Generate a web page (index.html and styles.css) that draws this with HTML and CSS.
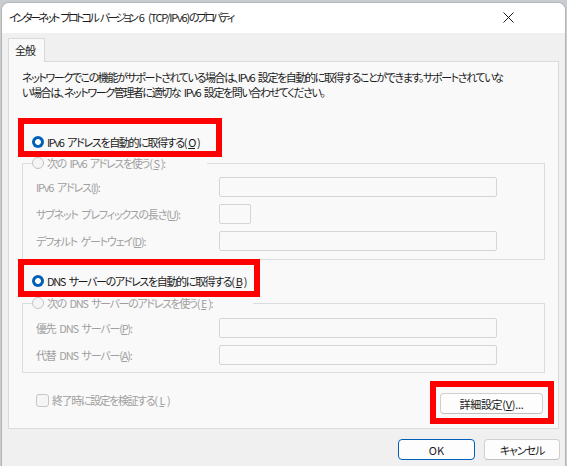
FILE: index.html
```html
<!DOCTYPE html>
<html lang="ja">
<head>
  <meta charset="UTF-8" />
  <title>インターネット プロトコル バージョン 6 (TCP/IPv6)のプロパティ</title>
  <link rel="stylesheet" href="styles.css">
</head>
<body>
  <div class="window">
    <div class="titlebar">
      <span class="title">インターネット プロトコル バージョン <span class="latin">6 (TCP/IPv6)</span>のプロパティ</span>
      <svg class="close" width="11" height="11" viewBox="0 0 11 11">
        <path d="M0.5 0.5 L10.5 10.5 M10.5 0.5 L0.5 10.5" stroke="#1a1a1a" stroke-width="1" fill="none"/>
      </svg>
    </div>

    <div class="content">
      <div class="tabs"><div class="tab">全般</div></div>

      <div class="panel">
        <p class="desc">ネットワークでこの機能がサポートされている場合は、IPv6 設定を自動的に取得することができます。サポートされていな<br>い場合は、ネットワーク管理者に適切な IPv6 設定を問い合わせてください。</p>

        <div class="radio-row first"><span class="radio checked"></span>IPv6 アドレスを自動的に取得する(<u>O</u>)</div>

        <fieldset class="group">
          <legend class="radio-row disabled legend-ip"><span class="radio"></span>次の IPv6 アドレスを使う(<u>S</u>):</legend>
          <div class="field"><span class="field-label">IPv6 アドレス(<u>I</u>):</span><span class="input wide"></span></div>
          <div class="field"><span class="field-label">サブネット プレフィックスの長さ(<u>U</u>):</span><span class="input small"></span></div>
          <div class="field"><span class="field-label">デフォルト ゲートウェイ(<u>D</u>):</span><span class="input wide"></span></div>
        </fieldset>

        <div class="radio-row dns"><span class="radio checked"></span>DNS サーバーのアドレスを自動的に取得する(<u>B</u>)</div>

        <fieldset class="group group-dns">
          <legend class="radio-row disabled legend-dns"><span class="radio"></span>次の DNS サーバーのアドレスを使う(<u>E</u>):</legend>
          <div class="field"><span class="field-label">優先 DNS サーバー(<u>P</u>):</span><span class="input wide"></span></div>
          <div class="field"><span class="field-label">代替 DNS サーバー(<u>A</u>):</span><span class="input wide"></span></div>
        </fieldset>

        <div class="bottom-row">
          <div class="check-row"><span class="checkbox"></span>終了時に設定を検証する(<u>L</u>)</div>
          <button class="btn advanced">詳細設定(<u>V</u>)...</button>
        </div>
      </div>

      <div class="footer">
        <button class="btn ok">OK</button>
        <button class="btn cancel">キャンセル</button>
      </div>
    </div>
  </div>

  <!-- red highlight frames -->
  <div class="mark mark-ipv6"></div>
  <div class="mark mark-dns"></div>
  <div class="mark mark-advanced"></div>
</body>
</html>
```

FILE: styles.css
```css
body {
  margin: 0;
  background-color: #c9ccd1;
  font-family: "Noto Sans CJK JP", "Noto Sans", sans-serif;
  font-feature-settings: "palt";
  font-size: 11px;
  letter-spacing: -1.1px;
  word-spacing: 2.5px;
  color: #1b1b1b;
}

.window {
  box-sizing: border-box;
  width: 565px;
  height: 464px;
  margin: 2px 0 0 1px;
  border: 1px solid #b4b4b4;
  border-bottom: none;
  border-radius: 8px 8px 0 0;
  background-color: #f0f0f0;
  overflow: hidden;
}

.titlebar {
  height: 28px;
  display: flex;
  align-items: center;
  justify-content: space-between;
  padding: 0 51px 2px 7px;
  background-color: #ffffff;
}

.title {
  line-height: 16px;
  letter-spacing: -2.7px;
  word-spacing: 3px;
  white-space: nowrap;
}

.title .latin {
  letter-spacing: -1.2px;
}

.content {
  padding: 5px 6px 0 6px;
}

.tabs {
  display: flex;
  height: 23px;
}

.tab {
  box-sizing: border-box;
  height: 24px;
  padding: 0 9px 0 6px;
  border: 1px solid #d9d9d9;
  border-bottom: none;
  background-color: #f9f9f9;
  line-height: 22px;
  position: relative;
  z-index: 1;
}

.panel {
  border: 1px solid #dadada;
  background-color: #f9f9f9;
  padding: 8px 13px 14px 13px;
}

.desc {
  margin: 0;
  line-height: 15px;
  letter-spacing: -1.4px;
  white-space: nowrap;
}

.radio-row {
  display: flex;
  align-items: center;
  gap: 2px;
  height: 18px;
  line-height: 18px;
  letter-spacing: -1.35px;
  white-space: nowrap;
}

.radio-row.first {
  margin: 33px 0 0 10px;
}

.radio-row.dns {
  margin: 12px 0 0 10px;
}

.radio {
  box-sizing: border-box;
  width: 12px;
  height: 12px;
  margin-right: 1px;
  border-radius: 50%;
  border: 1px solid #c4c4c4;
  background-color: #f5f5f5;
  flex: none;
}

.radio.checked {
  border: none;
  background: radial-gradient(circle, #ffffff 0 2.6px, #005fb8 3.2px);
}

.disabled {
  color: #a0a0a0;
}

.group {
  margin: 3px 0 0 0;
  padding: 5px 13px 8px 13px;
  border: 1px solid #dcdcdc;
  min-width: 0;
}

.group-dns {
  margin-top: 4px;
  padding-top: 6px;
  padding-bottom: 7px;
}

.group legend {
  padding: 0;
  margin-left: -4px;
}

.legend-ip {
  width: 175px;
}

.legend-dns {
  width: 221px;
}

.field {
  display: flex;
  align-items: center;
  height: 20px;
  color: #a0a0a0;
  letter-spacing: -1.2px;
}

.field + .field {
  margin-top: 7px;
}

.field-label {
  width: 183px;
  white-space: nowrap;
}

.input {
  box-sizing: border-box;
  height: 20px;
  border: 1px solid #d5d5d5;
  border-radius: 2px;
  background-color: #f9f9f9;
}

.input.wide {
  width: 278px;
}

.input.small {
  width: 32px;
}

.bottom-row {
  display: flex;
  align-items: flex-start;
  justify-content: space-between;
  margin-top: 20px;
}

.check-row {
  display: flex;
  align-items: center;
  gap: 3px;
  height: 18px;
  margin: -2px 0 0 14px;
  color: #a0a0a0;
  letter-spacing: -1.4px;
  white-space: nowrap;
}

.checkbox {
  box-sizing: border-box;
  width: 13px;
  height: 13px;
  border: 1px solid #c6c6c6;
  border-radius: 3px;
  background-color: #f5f5f5;
}

.btn {
  box-sizing: border-box;
  height: 21px;
  padding: 0;
  border: 1px solid #d0d0d0;
  border-bottom-color: #c0c0c0;
  border-radius: 4px;
  background-color: #fdfdfd;
  font: inherit;
  letter-spacing: inherit;
  color: #1b1b1b;
  line-height: 18px;
}

.advanced {
  width: 103px;
  margin-right: 2px;
  letter-spacing: -0.3px;
}

.footer {
  display: flex;
  justify-content: flex-end;
  gap: 9px;
  margin: 10px -1px 0 0;
}

.ok {
  width: 77px;
  border: 1px solid #005fb8;
  letter-spacing: 0;
}

.cancel {
  width: 76px;
}

.mark {
  position: absolute;
  box-sizing: border-box;
  border: 6px solid #ff0000;
}

.mark-ipv6 {
  left: 18px;
  top: 118px;
  width: 204px;
  height: 39px;
}

.mark-dns {
  left: 18px;
  top: 259px;
  width: 242px;
  height: 38px;
}

.mark-advanced {
  left: 430px;
  top: 381px;
  width: 124px;
  height: 43px;
}
```
